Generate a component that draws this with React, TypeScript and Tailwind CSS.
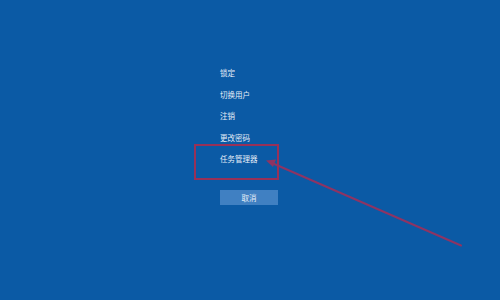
import React from "react";

export default function App() {
  const items = ["锁定", "切换用户", "注销", "更改密码"];
  return (
    <div
      className="relative w-[500px] h-[300px] overflow-hidden bg-[#0b5aa5] text-[#e6eef8]"
      style={{ fontFamily: '"Noto Sans CJK SC", "Noto Sans", sans-serif' }}
    >
      <div className="flex flex-col items-start pl-[220px] pt-[62px]">
        {items.map((t) => (
          <div key={t} className="h-[21.5px] leading-[21.5px] text-[7.5px]">
            {t}
          </div>
        ))}
        <div className="-ml-[26px] -mt-[4px] w-[85px] border-2 border-[#983158] pl-[24px] pt-[2px] pb-[8px]">
          <div className="h-[21.5px] leading-[21.5px] text-[7.5px]">任务管理器</div>
        </div>
        <button className="mt-[10px] w-[58px] h-[15px] bg-[#4080c2] text-[7.5px] leading-[15px] text-center text-[#e6eef8]">
          取消
        </button>
      </div>
      <svg
        className="absolute inset-0 pointer-events-none"
        width="500"
        height="300"
        viewBox="0 0 500 300"
      >
        <line x1="461" y1="245.5" x2="272" y2="163" stroke="#8e3463" strokeWidth="2" strokeLinecap="round" />
        <polygon points="266,160.5 276,159.5 273,167" fill="#8e3463" />
      </svg>
    </div>
  );
}
